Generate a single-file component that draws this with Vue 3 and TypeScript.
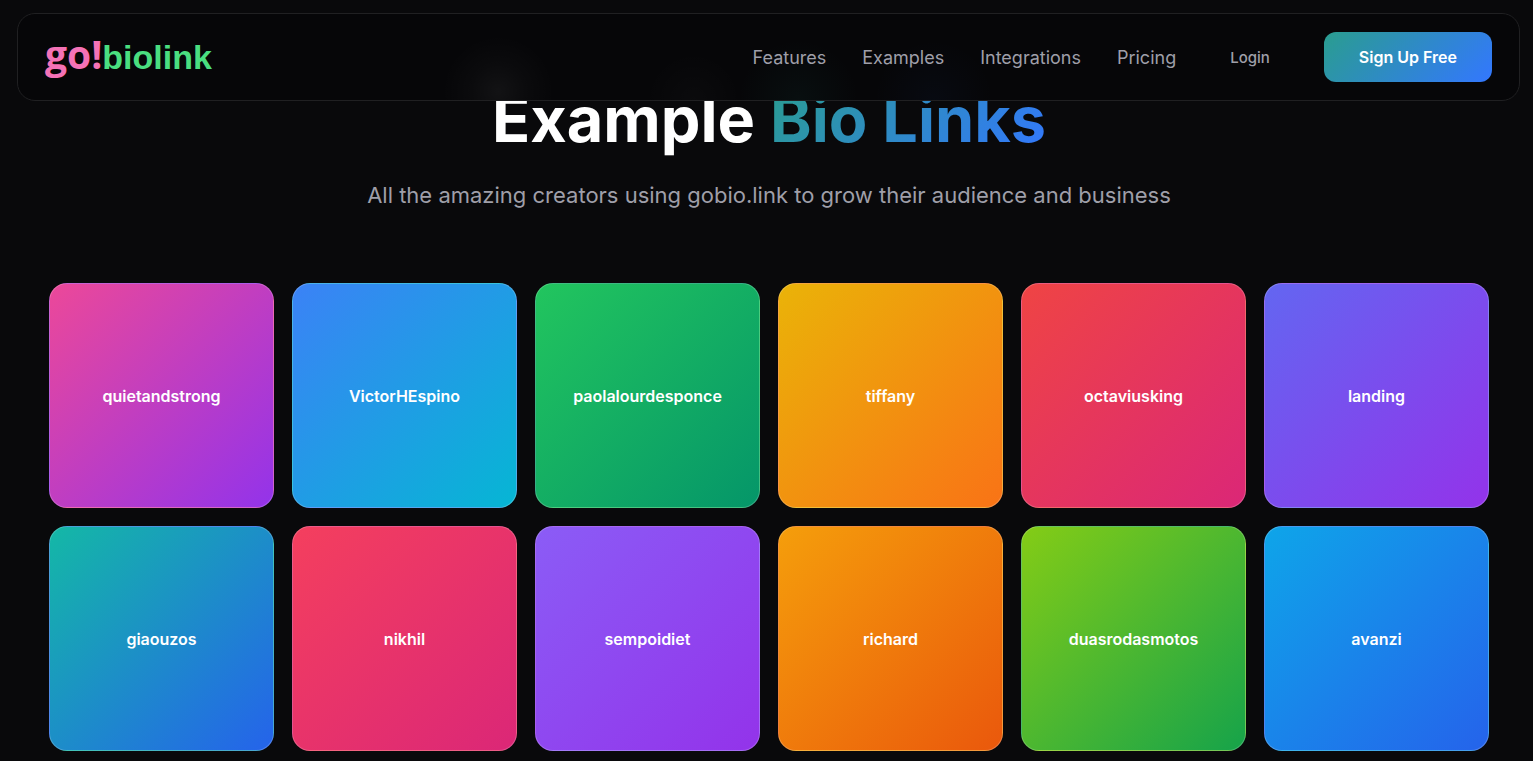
<script setup lang="ts">
interface NavItem {
  label: string
  href: string
}

interface Creator {
  name: string
  tone: string
}

const navItems: NavItem[] = [
  { label: 'Features', href: '#features' },
  { label: 'Examples', href: '#examples' },
  { label: 'Integrations', href: '#integrations' },
  { label: 'Pricing', href: '#pricing' },
]

const creators: Creator[] = [
  { name: 'quietandstrong', tone: 'pink-purple' },
  { name: 'VictorHEspino', tone: 'blue-cyan' },
  { name: 'paolalourdesponce', tone: 'green-emerald' },
  { name: 'tiffany', tone: 'yellow-orange' },
  { name: 'octaviusking', tone: 'red-pink' },
  { name: 'landing', tone: 'indigo-purple' },
  { name: 'giaouzos', tone: 'teal-blue' },
  { name: 'nikhil', tone: 'rose-pink' },
  { name: 'sempoidiet', tone: 'violet-purple' },
  { name: 'richard', tone: 'amber-orange' },
  { name: 'duasrodasmotos', tone: 'lime-green' },
  { name: 'avanzi', tone: 'sky-blue' },
]
</script>

<template>
  <div class="page">
    <header class="topbar">
      <a class="logo" href="#home"><span class="logo-go">go!</span><span class="logo-bio">biolink</span></a>
      <div class="menu">
        <nav class="links" aria-label="Main">
          <a v-for="item in navItems" :key="item.label" :href="item.href">{{ item.label }}</a>
        </nav>
        <a class="login" href="#login">Login</a>
        <button class="signup" type="button">Sign Up Free</button>
      </div>
    </header>

    <main class="content">
      <h1 class="title">Example <span class="accent">Bio Links</span></h1>
      <p class="subtitle">All the amazing creators using gobio.link to grow their audience and business</p>
      <section class="grid" aria-label="Creators">
        <a
          v-for="creator in creators"
          :key="creator.name"
          class="card"
          :class="creator.tone"
          :href="'#' + creator.name"
        >{{ creator.name }}</a>
      </section>
    </main>
  </div>
</template>

<style>
html,
body {
  margin: 0;
  background: #09090b;
}
</style>

<style scoped>
.page {
  min-height: 100vh;
  background: #09090b;
  color: #ffffff;
  font-family: Inter, "Liberation Sans", Arial, sans-serif;
}

a {
  color: inherit;
  text-decoration: none;
}

.topbar {
  position: fixed;
  z-index: 10;
  top: 13px;
  left: 17px;
  right: 13px;
  box-sizing: border-box;
  display: flex;
  align-items: center;
  justify-content: space-between;
  padding: 18px 27px;
  border: 1px solid #202022;
  border-radius: 18px;
  background:
    radial-gradient(circle 56px at 32% 90%, rgba(255, 255, 255, 0.05), rgba(255, 255, 255, 0.02) 50%, transparent),
    radial-gradient(circle 48px at 45% 100%, rgba(255, 255, 255, 0.02), transparent),
    radial-gradient(circle 60px at 52% 100%, rgba(42, 157, 143, 0.06), transparent),
    radial-gradient(circle 60px at 61% 100%, rgba(51, 119, 255, 0.04), transparent),
    #060608;
}

.logo {
  display: flex;
  align-items: baseline;
  padding-bottom: 3px;
  font-weight: 700;
  line-height: 42px;
}

.logo-go {
  color: #f472b6;
  font-family: "Open Sans", sans-serif;
  font-size: 39px;
}

.logo-bio {
  color: #4ade80;
  font-family: "Liberation Sans", Arial, sans-serif;
  font-size: 34px;
}

.menu {
  display: flex;
  align-items: center;
  color: #9f9fa9;
}

.links {
  display: flex;
  gap: 36px;
  font-size: 18px;
}

.login {
  padding: 0 54px;
  font-size: 15px;
  font-weight: 500;
}

.signup {
  padding: 0 35px;
  border: 0;
  border-radius: 12px;
  background: linear-gradient(135deg, #2a9d8f, #3377ff);
  color: #ffffff;
  font-family: inherit;
  font-size: 16px;
  font-weight: 600;
  line-height: 50px;
  cursor: pointer;
}

.content {
  padding: 81px 13px 10px 18px;
  text-align: center;
}

.title {
  margin: 0;
  font-size: 63px;
  font-weight: 700;
  line-height: 76px;
}

.accent {
  background: linear-gradient(135deg, #2a9d8f, #3377ff);
  background-clip: text;
  -webkit-background-clip: text;
  color: transparent;
}

.subtitle {
  margin: 22px 0 72px;
  color: #9f9fa9;
  font-size: 22px;
  line-height: 32px;
}

.grid {
  display: grid;
  grid-template-columns: repeat(6, 1fr);
  gap: 18px;
  max-width: 1440px;
  margin: 0 auto;
}

.card {
  display: flex;
  align-items: center;
  justify-content: center;
  box-sizing: border-box;
  min-width: 0;
  aspect-ratio: 1;
  border: 1px solid rgba(255, 255, 255, 0.2);
  border-radius: 18px;
  font-size: 16px;
  font-weight: 600;
}

.pink-purple { background-image: linear-gradient(135deg, #ec4899, #9333ea); }
.blue-cyan { background-image: linear-gradient(135deg, #3b82f6, #06b6d4); }
.green-emerald { background-image: linear-gradient(135deg, #22c55e, #059669); }
.yellow-orange { background-image: linear-gradient(135deg, #eab308, #f97316); }
.red-pink { background-image: linear-gradient(135deg, #ef4444, #db2777); }
.indigo-purple { background-image: linear-gradient(135deg, #6366f1, #9333ea); }
.teal-blue { background-image: linear-gradient(135deg, #14b8a6, #2563eb); }
.rose-pink { background-image: linear-gradient(135deg, #f43f5e, #db2777); }
.violet-purple { background-image: linear-gradient(135deg, #8b5cf6, #9333ea); }
.amber-orange { background-image: linear-gradient(135deg, #f59e0b, #ea580c); }
.lime-green { background-image: linear-gradient(135deg, #84cc16, #16a34a); }
.sky-blue { background-image: linear-gradient(135deg, #0ea5e9, #2563eb); }
</style>
